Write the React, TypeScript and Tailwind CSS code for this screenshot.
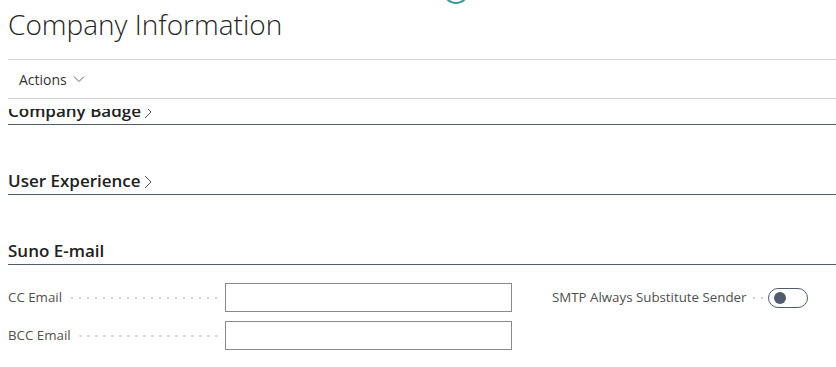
import React from 'react'

const font = { fontFamily: '"Open Sans", "Noto Sans", sans-serif' }

function Leader() {
  return (
    <div className="flex-1 ml-2 mr-[5px] h-[4px] bg-[radial-gradient(circle,#cfcfcf_1px,transparent_1.5px)] bg-[length:8px_4px] bg-repeat-x bg-right" />
  )
}

function SectionHeader({ title, chevron }: { title: string; chevron?: boolean }) {
  return (
    <div className="flex items-end h-[70px] border-b border-[#505c6d]">
      <h2 className="flex items-center text-[17px] font-semibold leading-[24px] text-[#212121] pb-[1px]">
        {title}
        {chevron && (
          <svg width="8" height="14" viewBox="0 0 8 14" className="ml-[3px] mt-[2px]" fill="none">
            <path d="M1 1l6 6-6 6" stroke="#505050" strokeWidth="1" />
          </svg>
        )}
      </h2>
    </div>
  )
}

function FieldRow({ label }: { label: string }) {
  return (
    <div className="flex items-center h-[29px]">
      <div className="flex items-center w-[217px] pt-[1px]">
        <span className="text-[13.3px] text-[#505050] whitespace-nowrap">{label}</span>
        <Leader />
      </div>
      <div className="w-[287px] h-[29px] border border-[#8a8a8a] bg-white" />
    </div>
  )
}

export default function App() {
  return (
    <div className="relative w-[836px] h-[367px] overflow-hidden bg-white" style={font}>
      {/* ring peeking from top */}
      <div className="absolute left-[443px] top-[-22px] w-[26px] h-[26px] rounded-full border-2 border-[#3c9a9a]" />

      <div className="ml-2">
        <div className="h-[60px] border-b border-[#d4d4d4]">
          <h1 className="pt-[4px] text-[28px] font-light leading-[40px] text-[#262626]">Company Information</h1>
        </div>
        <div className="h-[39px] border-b border-[#d4d4d4] flex items-center pl-[11px]">
          <span className="text-[14px] text-[#333]">Actions</span>
          <svg width="12" height="8" viewBox="0 0 12 8" className="ml-[6px]" fill="none">
            <path d="M1 1.5l5 5 5-5" stroke="#666" strokeWidth="1" />
          </svg>
        </div>

        <div className="mt-[10px] h-[258px] overflow-hidden">
          <div className="-mt-[54px]">
            <SectionHeader title="Company Badge" chevron />
            <SectionHeader title="User Experience" chevron />
            <SectionHeader title="Suno E-mail" />

            <div className="flex pt-[18px]">
              <div className="flex flex-col gap-[9px] w-[544px]">
                <FieldRow label="CC Email" />
                <FieldRow label="BCC Email" />
              </div>
              <div className="flex items-center h-[29px] pt-[1px]">
                <span className="text-[13.3px] text-[#505050] whitespace-nowrap">SMTP Always Substitute Sender</span>
                <div className="w-[14px] mx-[4px] h-[4px] bg-[radial-gradient(circle,#cfcfcf_1px,transparent_1.5px)] bg-[length:8px_4px] bg-repeat-x" />
                <div className="w-[40px] h-[20px] rounded-full border border-[#505c6d] flex items-center pl-[5px]">
                  <div className="w-[12px] h-[12px] rounded-full bg-[#505c6d]" />
                </div>
              </div>
            </div>
          </div>
        </div>
      </div>
    </div>
  )
}
